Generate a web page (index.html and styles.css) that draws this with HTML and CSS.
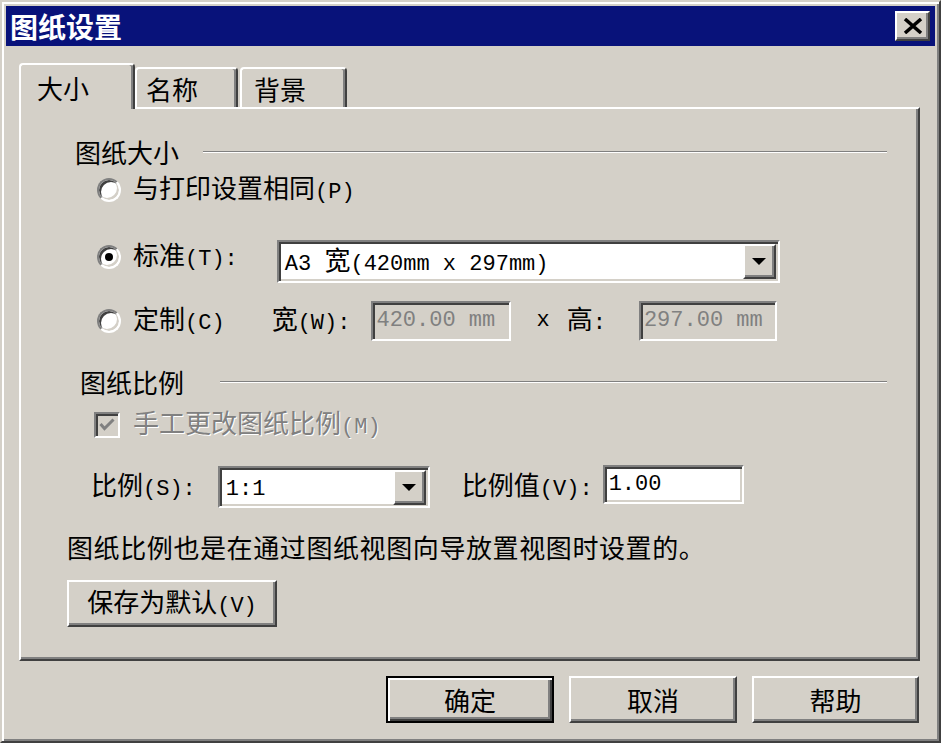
FILE: index.html
```html
<!DOCTYPE html>
<html>
<head>
  <meta charset="UTF-8">
  <title>图纸设置</title>
  <link rel="stylesheet" href="styles.css">
</head>
<body>

<div class="window">
  <div class="titlebar">
    <span class="title">图纸设置</span>
    <button class="close-btn">
      <svg width="20" height="16" viewBox="0 0 20 16"><path d="M2 1 L18 15 M18 1 L2 15" stroke="#000" stroke-width="3.5"/></svg>
    </button>
  </div>

  <div class="dialog-body">
    <div class="tabs">
      <div class="tab active">大小</div>
      <div class="tab tab-name">名称</div>
      <div class="tab tab-bg">背景</div>
    </div>

    <div class="panel">
      <div class="group-head head-size"><span>图纸大小</span><div class="etch"></div></div>

      <div class="row row-same">
        <span class="choice"><span class="radio"></span><span>与打印设置相同<span class="lat">(P)</span></span></span>
      </div>

      <div class="row row-std">
        <span class="choice"><span class="radio checked"></span><span>标准<span class="lat">(T):</span></span></span>
        <div class="combo combo-paper">
          <span class="combo-text"><span class="lat">A3 </span>宽<span class="lat">(420mm x 297mm)</span></span>
          <span class="drop-btn"><span class="arrow"></span></span>
        </div>
      </div>

      <div class="row row-custom">
        <span class="choice"><span class="radio"></span><span>定制<span class="lat">(C)</span></span></span>
        <span class="lbl-w">宽<span class="lat">(W):</span></span>
        <div class="field disabled field-w"><span class="lat">420.00 mm</span></div>
        <span class="lbl-x lat">x</span>
        <span class="lbl-h">高<span class="lat">:</span></span>
        <div class="field disabled field-h"><span class="lat">297.00 mm</span></div>
      </div>

      <div class="group-head head-scale"><span>图纸比例</span><div class="etch"></div></div>

      <div class="row row-check">
        <span class="checkbox">
          <svg width="16" height="14" viewBox="0 0 16 14"><polyline points="1.5,6 5.5,10.5 14.5,1.5" fill="none" stroke="#808080" stroke-width="3"/></svg>
        </span>
        <span class="disabled-text">手工更改图纸比例<span class="lat">(M)</span></span>
      </div>

      <div class="row row-scale">
        <span class="lbl-scale">比例<span class="lat">(S):</span></span>
        <div class="combo combo-scale">
          <span class="combo-text"><span class="lat">1:1</span></span>
          <span class="drop-btn"><span class="arrow"></span></span>
        </div>
        <span class="lbl-value">比例值<span class="lat">(V):</span></span>
        <div class="field field-value"><span class="lat">1.00</span></div>
      </div>

      <div class="info">图纸比例也是在通过图纸视图向导放置视图时设置的。</div>

      <button class="btn save-btn">保存为默认<span class="lat">(V)</span></button>
    </div>

    <div class="actions">
      <button class="btn default">确定</button>
      <button class="btn">取消</button>
      <button class="btn btn-help">帮助</button>
    </div>
  </div>
</div>

</body>
</html>
```

FILE: styles.css
```css
html, body {
  margin: 0;
  padding: 0;
  background: #d4d0c8;
  overflow: hidden;
  font-family: "Noto Sans CJK SC", sans-serif;
  font-size: 26px;
  color: #000;
}

.lat {
  font-family: "Liberation Mono", monospace;
  font-size: 22px;
}

.window {
  width: 941px;
  height: 743px;
  box-sizing: border-box;
  border: 2px solid;
  border-color: #d4d0c8 #404040 #404040 #d4d0c8;
  box-shadow: inset 2px 2px 0 #fff, inset -2px -2px 0 #808080;
  padding: 4px;
}

/* title bar */
.titlebar {
  height: 40px;
  background: #08127a;
  display: flex;
  align-items: center;
  justify-content: space-between;
  padding: 0 5px 0 4px;
}

.title {
  color: #fff;
  font-weight: bold;
  font-size: 28px;
  line-height: 40px;
}

.close-btn {
  width: 35px;
  height: 30px;
  padding: 0;
  box-sizing: border-box;
  border: 2px solid;
  border-color: #fff #404040 #404040 #fff;
  box-shadow: inset -2px -2px 0 #808080;
  background: #d4d0c8;
  display: flex;
  justify-content: center;
  align-items: center;
}

.dialog-body {
  padding: 17px 15px 0 13px;
}

/* tabs */
.tabs {
  display: flex;
  align-items: flex-end;
  height: 44px;
}

.tab {
  box-sizing: border-box;
  height: 40px;
  border: 2px solid;
  border-color: #fff #404040 transparent #fff;
  border-bottom: none;
  border-radius: 4px 4px 0 0;
  box-shadow: inset -2px 0 0 #808080;
  background: #d4d0c8;
  padding: 5px 0 0 9px;
  line-height: 30px;
}

.tab.active {
  width: 116px;
  height: 46px;
  margin-bottom: -2px;
  padding: 8px 0 0 16px;
  position: relative;
  z-index: 1;
}

.tab-name {
  width: 103px;
}

.tab-bg {
  width: 107px;
  margin-left: 2px;
  padding-left: 12px;
}

/* panel */
.panel {
  height: 554px;
  box-sizing: border-box;
  border: 2px solid;
  border-color: #fff #404040 #404040 #fff;
  box-shadow: inset -2px -2px 0 #808080;
  display: flex;
  flex-direction: column;
  align-items: flex-start;
}

.group-head {
  display: flex;
  align-items: center;
  height: 30px;
  line-height: 30px;
  align-self: stretch;
}

.etch {
  flex: 1;
  height: 0;
  border-top: 1px solid #808080;
  border-bottom: 1px solid #fff;
  margin-right: 31px;
}

.head-size {
  margin: 28px 0 0 54px;
}

.head-size .etch {
  margin-left: 24px;
}

.head-scale {
  margin: 26px 0 0 59px;
}

.head-scale .etch {
  margin-left: 36px;
}

.row {
  display: flex;
  align-items: center;
  line-height: 30px;
  white-space: nowrap;
}

.choice {
  display: flex;
  align-items: center;
  gap: 12px;
  height: 30px;
}

.radio {
  width: 24px;
  height: 24px;
  box-sizing: border-box;
  border-radius: 50%;
  border: 2px solid;
  border-color: #808080 #fff #fff #808080;
  box-shadow: inset 2px 2px 0 #404040, inset -2px -2px 0 #d4d0c8;
  background: #fff;
  display: flex;
  justify-content: center;
  align-items: center;
}

.radio.checked::after {
  content: "";
  width: 8px;
  height: 8px;
  border-radius: 50%;
  background: #000;
}

.row-same {
  height: 30px;
  margin: 8px 0 0 76px;
}

.row-std {
  height: 43px;
  margin: 35px 0 0 76px;
  align-items: flex-start;
}

.row-std .choice {
  margin-top: 2px;
}

.row-custom {
  height: 40px;
  margin: 18px 0 0 76px;
}

/* fields */
.field, .combo {
  box-sizing: border-box;
  border: 2px solid;
  border-color: #808080 #fff #fff #808080;
  box-shadow: inset 2px 2px 0 #404040, inset -2px -2px 0 #d4d0c8;
  background: #fff;
  display: flex;
  align-items: center;
}

.field {
  padding-left: 3px;
}

.field.disabled {
  background: #d4d0c8;
  color: #808080;
}

.combo-text {
  flex: 1;
  padding-left: 6px;
}

.drop-btn {
  width: 33px;
  height: 35px;
  box-sizing: border-box;
  margin-right: 2px;
  border: 2px solid;
  border-color: #fff #404040 #404040 #fff;
  box-shadow: inset -2px -2px 0 #808080;
  background: #d4d0c8;
  display: flex;
  justify-content: center;
  align-items: center;
}

.arrow {
  width: 0;
  height: 0;
  border-left: 7px solid transparent;
  border-right: 7px solid transparent;
  border-top: 7px solid #000;
}

.combo-paper {
  width: 503px;
  height: 43px;
  margin-left: 39px;
}

.lbl-w {
  margin-left: 47px;
}

.field-w {
  width: 140px;
  height: 40px;
  margin-left: 21px;
}

.lbl-x {
  margin-left: 25px;
}

.lbl-h {
  margin-left: 17px;
}

.field-h {
  width: 138px;
  height: 40px;
  margin-left: 33px;
}

/* checkbox */
.row-check {
  height: 30px;
  margin: 13px 0 0 73px;
}

.checkbox {
  width: 26px;
  height: 26px;
  box-sizing: border-box;
  border: 2px solid;
  border-color: #808080 #fff #fff #808080;
  box-shadow: inset 2px 2px 0 #404040, inset -2px -2px 0 #d4d0c8;
  background: #d4d0c8;
  display: flex;
  justify-content: center;
  align-items: center;
}

.disabled-text {
  margin-left: 13px;
  color: #808080;
  text-shadow: 1px 1px 0 #fff;
}

/* scale row */
.row-scale {
  height: 43px;
  margin: 25px 0 0 70px;
}

.combo-scale {
  width: 212px;
  height: 42px;
  margin-left: 22px;
  align-self: flex-end;
}

.lbl-value {
  margin-left: 32px;
}

.field-value {
  width: 141px;
  height: 39px;
  margin-left: 10px;
  align-self: flex-start;
  padding-left: 4px;
}

.info {
  margin: 24px 0 0 46px;
  line-height: 30px;
  letter-spacing: 0.6px;
}

/* buttons */
.btn {
  font-family: inherit;
  font-size: 26px;
  color: #000;
  padding: 0;
  box-sizing: border-box;
  border: 2px solid;
  border-color: #fff #404040 #404040 #fff;
  box-shadow: inset -2px -2px 0 #808080;
  background: #d4d0c8;
  line-height: 30px;
  white-space: nowrap;
}

.btn.default {
  border-color: #000;
  box-shadow: inset 2px 2px 0 #fff, inset -2px -2px 0 #404040, inset -4px -4px 0 #808080;
}

.save-btn {
  width: 210px;
  height: 47px;
  margin: 18px 0 0 46px;
}

.actions {
  display: flex;
  justify-content: flex-end;
  gap: 15px;
  margin-top: 15px;
  padding-right: 1px;
}

.actions .btn {
  width: 168px;
  height: 47px;
}

.actions .btn-help {
  width: 167px;
}
```
